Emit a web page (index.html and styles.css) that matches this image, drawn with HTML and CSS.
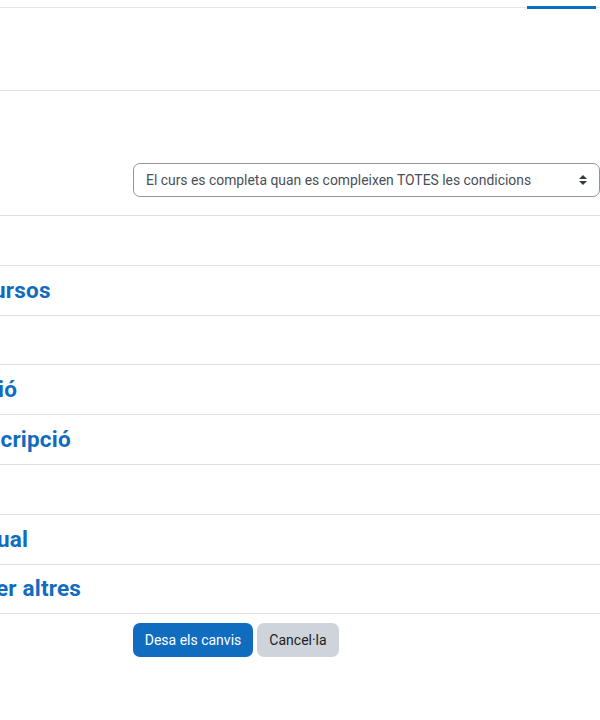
FILE: index.html
```html
<!DOCTYPE html>
<html lang="ca">
<head>
<meta charset="utf-8">
<title>Compleció del curs</title>
<link rel="stylesheet" href="styles.css">
</head>
<body>
  <nav class="tabs">
    <span class="tab tab-active"></span>
  </nav>
  <div class="intro"></div>
  <form class="completion-form">
    <div class="form-row">
      <div class="form-label"></div>
      <div class="select-wrap">
        <select class="form-select">
          <option>El curs es completa quan es compleixen TOTES les condicions</option>
        </select>
        <svg class="select-caret" width="8" height="10" viewBox="0 0 4 5" aria-hidden="true"><path fill="#343a40" d="M2 0L0 2h4zm0 5L0 3h4z"/></svg>
      </div>
    </div>
    <div class="sections">
      <div class="section"><h3 class="section-title"></h3></div>
      <div class="section"><h3 class="section-title t-cursos">ursos</h3></div>
      <div class="section"><h3 class="section-title"></h3></div>
      <div class="section"><h3 class="section-title t-io">ió</h3></div>
      <div class="section"><h3 class="section-title t-cripcio">cripció</h3></div>
      <div class="section"><h3 class="section-title"></h3></div>
      <div class="section"><h3 class="section-title t-ual">ual</h3></div>
      <div class="section"><h3 class="section-title t-altres">er altres</h3></div>
    </div>
    <div class="actions">
      <button type="button" class="btn btn-primary">Desa els canvis</button>
      <button type="button" class="btn btn-secondary">Cancel·la</button>
    </div>
  </form>
</body>
</html>
```
FILE: styles.css
```css
* { box-sizing: border-box; }
html, body {
  margin: 0;
  padding: 0;
  background: #fff;
  font-family: Roboto, "Liberation Sans", sans-serif;
  color: #1d2125;
  overflow: hidden;
}
.tabs {
  display: flex;
  justify-content: flex-end;
  align-items: flex-start;
  height: 8px;
  border-bottom: 1px solid #e4e6e9;
  padding-right: 4px;
}
.tab {
  display: block;
  width: 69px;
  height: 9px;
  border-bottom: 3px solid #0f6cbf;
  flex: none;
}
.intro {
  height: 83px;
  border-bottom: 1px solid #dee2e6;
}
.completion-form { margin: 0; }
.form-row {
  display: grid;
  grid-template-columns: 133px 1fr;
  padding: 72px 0 18px;
}
.select-wrap {
  position: relative;
}
.form-select {
  display: block;
  width: 467px;
  height: 34px;
  margin: 0;
  padding: 0 30px 0 12px;
  border: 1px solid #8f959e;
  border-radius: 7px;
  background: #fff;
  color: #495057;
  font-family: Roboto, "Liberation Sans", sans-serif;
  font-size: 13.9px;
  -webkit-appearance: none;
  appearance: none;
}
.select-caret {
  position: absolute;
  left: 446px;
  top: 12px;
}
.sections {
  border-bottom: 1px solid #dee2e6;
}
.section {
  display: flex;
  align-items: center;
  height: 49.8px;
  border-top: 1px solid #dee2e6;
  overflow: hidden;
}
.section-title {
  margin: 0;
  font-size: 22.5px;
  line-height: 27px;
  font-weight: 700;
  letter-spacing: 0.2px;
  color: #0f6cbf;
  white-space: nowrap;
}
.t-cursos { margin-left: -7px; }
.t-io { margin-left: -2px; }
.t-cripcio { margin-left: 0.5px; }
.t-ual { margin-left: -3px; }
.t-altres { margin-left: -4px; }
.actions {
  display: flex;
  gap: 4px;
  padding: 9px 0 0 133px;
}
.btn {
  height: 34px;
  padding: 0;
  border: 0;
  border-radius: 7px;
  font-family: Roboto, "Liberation Sans", sans-serif;
  font-size: 14px;
  line-height: 34px;
  white-space: nowrap;
  text-align: center;
}
.btn-primary {
  width: 120px;
  background: #0f6cbf;
  color: #fff;
}
.btn-secondary {
  width: 82px;
  background: #ced4da;
  color: #1d2125;
}
```
